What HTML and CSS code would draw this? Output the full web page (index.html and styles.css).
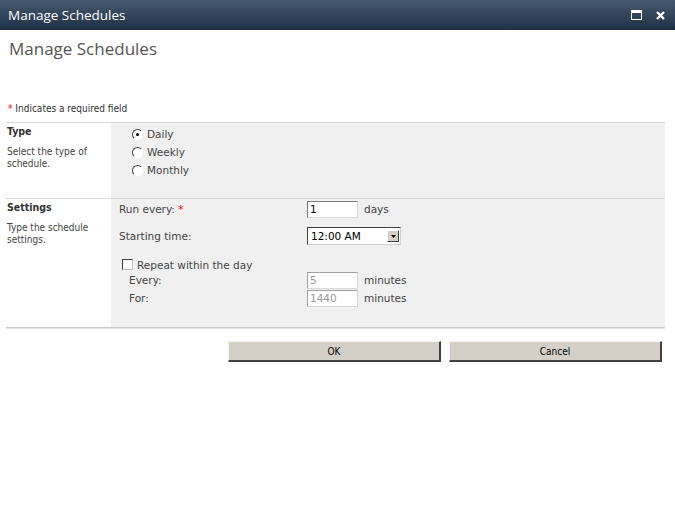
FILE: index.html
```html
<!DOCTYPE html>
<html lang="en">
<head>
    <meta charset="UTF-8">
    <title>Manage Schedules</title>
    <link rel="stylesheet" href="styles.css">
</head>
<body>
    <div class="titlebar">
        <span class="title">Manage Schedules</span>
        <div class="win-buttons">
            <svg width="11" height="10" viewBox="0 0 11 10"><rect x="0.5" y="0.5" width="10" height="9" fill="none" stroke="#fff"/><rect x="0" y="0" width="11" height="3" fill="#fff"/></svg>
            <svg width="9" height="9" viewBox="0 0 9 9"><path d="M1 1 L8 8 M8 1 L1 8" stroke="#fff" stroke-width="2.4"/></svg>
        </div>
    </div>

    <div class="page">
        <h1>Manage Schedules</h1>
        <p class="required"><span class="star">*</span> Indicates a required field</p>

        <div class="form">
            <div class="section">
                <div class="label-col">
                    <h3>Type</h3>
                    <p>Select the type of schedule.</p>
                </div>
                <div class="control-col radios">
                    <label class="radio"><span class="radio-dot checked"></span>Daily</label>
                    <label class="radio"><span class="radio-dot"></span>Weekly</label>
                    <label class="radio"><span class="radio-dot"></span>Monthly</label>
                </div>
            </div>

            <div class="section last">
                <div class="label-col">
                    <h3>Settings</h3>
                    <p>Type the schedule settings.</p>
                </div>
                <div class="control-col settings">
                    <div class="row first">
                        <span class="field-label">Run every: <span class="star">*</span></span>
                        <span class="textbox">1</span>
                        <span class="unit">days</span>
                    </div>
                    <div class="row time">
                        <span class="field-label">Starting time:</span>
                        <span class="select">12:00 AM<span class="drop"><svg width="5" height="3" viewBox="0 0 5 3"><path d="M0 0 H5 L2.5 3 Z" fill="#000"/></svg></span></span>
                    </div>
                    <div class="row repeat">
                        <span class="checkbox"></span>
                        <span>Repeat within the day</span>
                    </div>
                    <div class="row sub">
                        <span class="field-label">Every:</span>
                        <span class="textbox disabled">5</span>
                        <span class="unit">minutes</span>
                    </div>
                    <div class="row sub">
                        <span class="field-label">For:</span>
                        <span class="textbox disabled">1440</span>
                        <span class="unit">minutes</span>
                    </div>
                </div>
            </div>
        </div>

        <div class="buttons">
            <button>OK</button>
            <button>Cancel</button>
        </div>
    </div>
</body>
</html>
```

FILE: styles.css
```css
body {
    margin: 0;
    font-family: "DejaVu Sans", Verdana, sans-serif;
    font-size: 10.5px;
    color: #333;
    background-color: #fff;
}
.titlebar {
    height: 30px;
    display: flex;
    align-items: center;
    justify-content: space-between;
    padding: 0 8px;
    background: linear-gradient(#45596f, #1f3046);
    color: #fff;
}
.title {
    font-family: "Open Sans", sans-serif;
    font-size: 13.5px;
}
.win-buttons {
    display: flex;
    align-items: center;
    gap: 14px;
    padding-right: 2px;
}
.page {
    padding: 0 10px 0 6px;
}
h1 {
    margin: 0;
    padding: 7px 3px 0;
    font-family: "Open Sans", sans-serif;
    font-size: 17px;
    font-weight: normal;
    color: #555;
}
.required {
    margin: 43px 0 0 2px;
    font-family: "DejaVu Sans Condensed", "DejaVu Sans", sans-serif;
    font-size: 10px;
    color: #333;
}
.star {
    color: #e00;
}
.form {
    margin-top: 8px;
}
.section {
    display: flex;
    border-top: 1px solid #d8d8d8;
}
.section.last {
    border-bottom: 1px solid #c8c8c8;
    box-shadow: 0 1px 0 #e4e4e4;
}
.label-col {
    width: 104px;
    padding: 2px 0 0 1px;
    font-family: "DejaVu Sans Condensed", "DejaVu Sans", sans-serif;
    font-size: 10px;
    line-height: 12px;
    color: #444;
}
.label-col h3 {
    margin: 0;
    font-size: 10.5px;
    font-weight: bold;
    color: #333;
}
.label-col p {
    margin: 9px 0 0;
    padding-right: 8px;
}
.control-col {
    flex: 1;
    background-color: #f0f0f0;
}
.radios {
    display: flex;
    flex-direction: column;
    padding: 2px 0 19px 21px;
}
.radio {
    display: flex;
    align-items: center;
    height: 18px;
    color: #444;
}
.radio-dot {
    width: 9px;
    height: 9px;
    margin-right: 4px;
    border: 1px solid;
    border-color: #404040 #fff #fff #404040;
    border-radius: 50%;
    background-color: #fff;
    position: relative;
}
.radio-dot.checked::after {
    content: "";
    position: absolute;
    left: 3px;
    top: 3px;
    width: 3px;
    height: 3px;
    border-radius: 50%;
    background-color: #000;
}
.settings {
    padding: 1px 0 20px 8px;
}
.row {
    display: flex;
    align-items: center;
    height: 18px;
    color: #444;
}
.row.time {
    margin-top: 9px;
}
.row.repeat {
    margin-top: 13px;
    height: 13px;
    padding-left: 3px;
}
.row.sub {
    padding-left: 10px;
}
.field-label {
    width: 188px;
    flex-shrink: 0;
}
.row.sub .field-label {
    width: 178px;
}
.textbox {
    width: 45px;
    height: 13px;
    padding: 1px 2px;
    border: 1px solid;
    border-color: #7a7a7a #d8d8d8 #d8d8d8 #7a7a7a;
    background-color: #fff;
    color: #000;
    font-size: 10.5px;
    line-height: 13px;
}
.textbox.disabled {
    border-color: #a0a0a0 #d8d8d8 #d8d8d8 #a0a0a0;
    color: #999;
}
.unit {
    margin-left: 6px;
}
.select {
    display: flex;
    align-items: center;
    justify-content: space-between;
    width: 88px;
    height: 14px;
    padding: 1px 1px 1px 3px;
    border: 1px solid;
    border-color: #404040 #d0d0d0 #d0d0d0 #404040;
    background-color: #fff;
    color: #000;
}
.drop {
    display: flex;
    align-items: center;
    justify-content: center;
    width: 12px;
    height: 12px;
    background-color: #d4d0c8;
    border: 1px solid;
    border-color: #fff #404040 #404040 #fff;
    box-sizing: border-box;
}
.checkbox {
    width: 9px;
    height: 9px;
    margin-right: 4px;
    border: 1px solid;
    border-color: #404040 #c0c0c0 #c0c0c0 #404040;
    background-color: #fff;
}
.buttons {
    display: flex;
    justify-content: flex-end;
    gap: 8px;
    margin-top: 13px;
    padding-right: 3px;
}
button {
    width: 213px;
    height: 21px;
    padding: 0;
    background-color: #d4d0c8;
    border: 1px solid;
    border-color: #f4f4f4 #404040 #404040 #f4f4f4;
    border-width: 1px 2px 2px 1px;
    font-family: "DejaVu Sans Condensed", "DejaVu Sans", sans-serif;
    font-size: 10px;
    color: #000;
}
```
